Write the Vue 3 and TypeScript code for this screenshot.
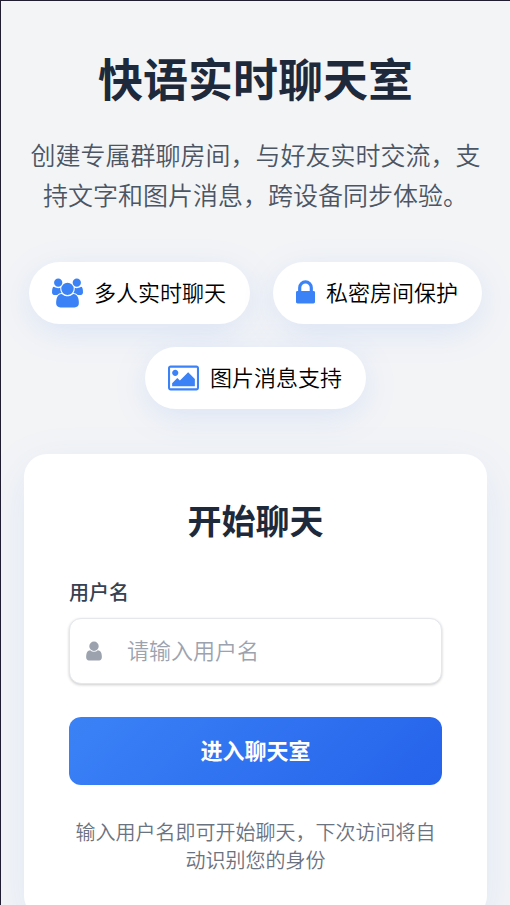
<script setup lang="ts">
import { ref } from 'vue'

interface Feature {
  label: string
  viewBox: string
  width: number
  path: string
}

const features: Feature[] = [
  {
    label: '多人实时聊天',
    viewBox: '0 0 1920 1792',
    width: 31,
    path: 'M593 896q-162 5-265 128h-134q-82 0-138-40.5t-56-118.5q0-353 124-353 6 0 43.5 21t97.5 42.5 119 21.5q67 0 133-23-5 37-5 66 0 139 81 256zm1071 637q0 120-73 189.5t-194 69.5h-874q-121 0-194-69.5t-73-189.5q0-53 3.5-103.5t14-109 26.5-108.5 43-97.5 62-81 85.5-53.5 111.5-20q10 0 43 21.5t73 48 107 48 135 21.5 135-21.5 107-48 73-48 43-21.5q61 0 111.5 20t85.5 53.5 62 81 43 97.5 26.5 108.5 14 109 3.5 103.5zm-1024-1277q0 106-75 181t-181 75-181-75-75-181 75-181 181-75 181 75 75 181zm704 384q0 159-112.5 271.5t-271.5 112.5-271.5-112.5-112.5-271.5 112.5-271.5 271.5-112.5 271.5 112.5 112.5 271.5zm576 225q0 78-56 118.5t-138 40.5h-134q-103-123-265-128 81-117 81-256 0-29-5-66 66 23 133 23 59 0 119-21.5t97.5-42.5 43.5-21q124 0 124 353zm-128-609q0 106-75 181t-181 75-181-75-75-181 75-181 181-75 181 75 75 181z',
  },
  {
    label: '私密房间保护',
    viewBox: '320 0 1152 1792',
    width: 19,
    path: 'M640 768h512v-192q0-106-75-181t-181-75-181 75-75 181v192zm832 96v576q0 40-28 68t-68 28h-960q-40 0-68-28t-28-68v-576q0-40 28-68t68-28h32v-192q0-184 132-316t316-132 316 132 132 316v192h32q40 0 68 28t28 68z',
  },
  {
    label: '图片消息支持',
    viewBox: '-64 0 1920 1792',
    width: 31,
    path: 'M576 576q0 80-56 136t-136 56-136-56-56-136 56-136 136-56 136 56 56 136zm1024 384v448h-1408v-192l320-320 160 160 512-512zm96-704h-1600q-13 0-22.5 9.5t-9.5 22.5v1216q0 13 9.5 22.5t22.5 9.5h1600q13 0 22.5-9.5t9.5-22.5v-1216q0-13-9.5-22.5t-22.5-9.5zm160 32v1216q0 66-47 113t-113 47h-1600q-66 0-113-47t-47-113v-1216q0-66 47-113t113-47h1600q66 0 113 47t47 113z',
  },
]

const username = ref('')
</script>

<template>
  <main class="page">
    <header class="hero">
      <h1 class="title">快语实时聊天室</h1>
      <p class="intro">创建专属群聊房间，与好友实时交流，支持文字和图片消息，跨设备同步体验。</p>
      <ul class="features">
        <li v-for="f in features" :key="f.label" class="pill">
          <svg :viewBox="f.viewBox" :width="f.width" height="30" aria-hidden="true">
            <path :d="f.path" fill="currentColor" />
          </svg>
          <span class="pill-text">{{ f.label }}</span>
        </li>
      </ul>
    </header>

    <section class="card">
      <h2 class="card-title">开始聊天</h2>
      <form @submit.prevent>
        <label class="label" for="username">用户名</label>
        <div class="field">
          <svg viewBox="256 0 1280 1792" width="16" height="22" aria-hidden="true">
            <path
              fill="currentColor"
              d="M1536 1399q0 109-62.5 187t-150.5 78h-854q-88 0-150.5-78t-62.5-187q0-85 8.5-160.5t31.5-152 58.5-131 94-89 134.5-34.5q131 128 313 128t313-128q76 0 134.5 34.5t94 89 58.5 131 31.5 152 8.5 160.5zm-256-887q0 159-112.5 271.5t-271.5 112.5-271.5-112.5-112.5-271.5 112.5-271.5 271.5-112.5 271.5 112.5 112.5 271.5z"
            />
          </svg>
          <input id="username" v-model="username" class="input" type="text" placeholder="请输入用户名" />
        </div>
        <button class="submit" type="submit">进入聊天室</button>
      </form>
      <p class="hint">输入用户名即可开始聊天，下次访问将自动识别您的身份</p>
    </section>
  </main>
</template>

<style>
body {
  margin: 0;
  background: #f3f4f6;
}
</style>

<style scoped>
.page {
  box-sizing: border-box;
  min-height: 100vh;
  padding: 49px 23px 45px;
  border-top: 1px solid #211d30;
  border-left: 1px solid #211d30;
  background: #f3f4f6;
  color: #000;
  font-family: "Noto Sans CJK SC", sans-serif;
  font-weight: 350;
}

.hero {
  text-align: center;
}

.title {
  margin: 0 0 28px;
  color: #1e293b;
  font-size: 45px;
  font-weight: 700;
  line-height: 56px;
}

.intro {
  margin: 0 0 48px;
  color: #4b5563;
  font-size: 25px;
  line-height: 40px;
}

.features {
  display: flex;
  flex-wrap: wrap;
  justify-content: center;
  gap: 23px;
  margin: 0 0 45px;
  padding: 0;
  list-style: none;
}

.pill {
  display: flex;
  align-items: center;
  gap: 11px;
  padding: 14px 24px 14px 23px;
  border-radius: 34px;
  background: #fff;
  box-shadow: 0 8px 34px rgba(59, 130, 246, 0.13);
  font-size: 22px;
  line-height: 30px;
}

.pill-text {
  padding-bottom: 4px;
}

.pill svg {
  color: #3b82f6;
}

.card {
  max-width: 640px;
  box-sizing: border-box;
  margin: 0 auto;
  padding: 45px;
  border-radius: 23px;
  background: #fff;
  box-shadow: 0 12px 45px rgba(59, 130, 246, 0.1);
}

.card-title {
  margin: 0 0 37px;
  color: #1e293b;
  font-size: 34px;
  font-weight: 700;
  line-height: 42px;
  text-align: center;
}

.label {
  display: block;
  margin-bottom: 12px;
  color: #374151;
  font-size: 20px;
  font-weight: 500;
  line-height: 28px;
}

.field {
  display: flex;
  align-items: center;
  gap: 25px;
  box-sizing: border-box;
  height: 66px;
  margin-bottom: 33px;
  padding: 0 16px;
  border: 1px solid #e5e7eb;
  border-radius: 12px;
  background: #fff;
  box-shadow: 0 1px 3px rgba(0, 0, 0, 0.2);
}

.field svg {
  flex: none;
  color: #9ca3af;
}

.input {
  flex: 1;
  min-width: 0;
  padding: 0 0 4px;
  border: 0;
  outline: 0;
  background: transparent;
  color: #1f2937;
  font-family: inherit;
  font-size: 22px;
  font-weight: inherit;
  line-height: 34px;
}

.input::placeholder {
  color: #9ca3af;
}

.submit {
  display: block;
  width: 100%;
  height: 68px;
  margin: 0 0 33px;
  padding: 0 0 4px;
  border: 0;
  border-radius: 12px;
  background: linear-gradient(135deg, #3b82f6, #2563eb);
  color: #fff;
  font-family: inherit;
  font-size: 22px;
  font-weight: 700;
  line-height: 34px;
  cursor: pointer;
}

.hint {
  margin: 0;
  color: #6b7280;
  font-size: 20px;
  line-height: 28px;
  text-align: center;
}
</style>
